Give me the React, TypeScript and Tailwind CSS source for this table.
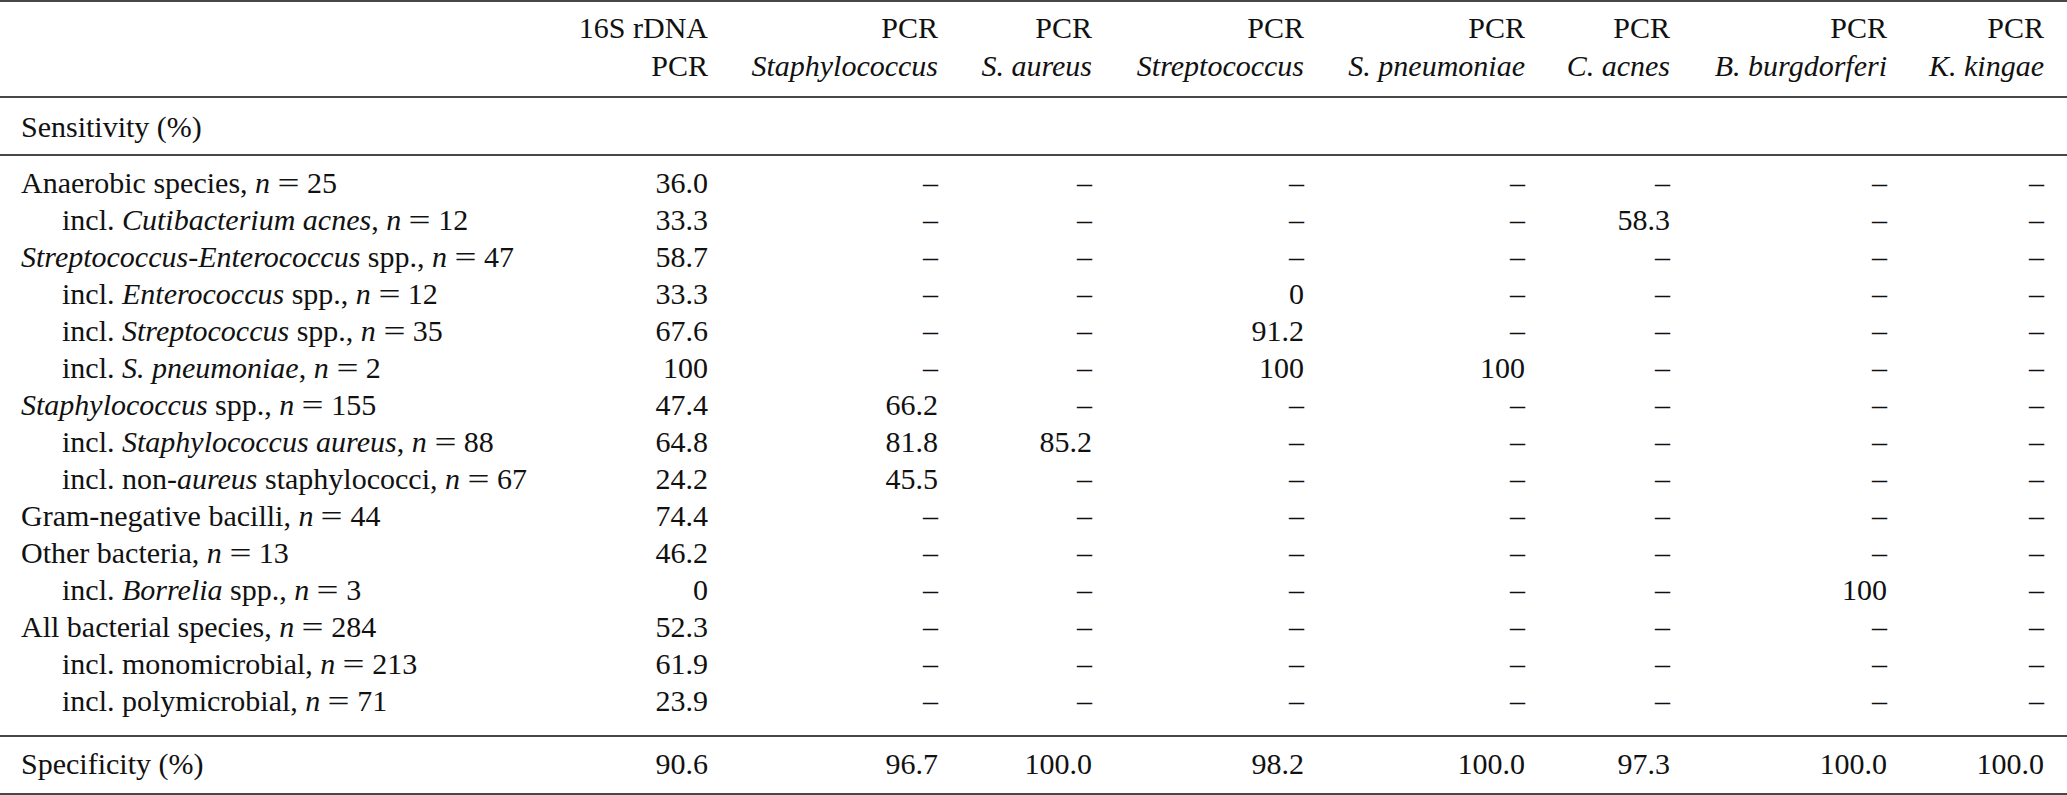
import React from "react";

const D = "\u2013";

type Row = { label: React.ReactNode; indent?: boolean; vals: string[] };

const N = ({ v }: { v: string }) => (
  <>
    , <i>n</i>
    <span className="inline-block w-[23px] mx-[7px] text-center scale-x-[1.3]">=</span>
    {v}
  </>
);

const rows: Row[] = [
  { label: <>Anaerobic species<N v="25" /></>, vals: ["36.0", D, D, D, D, D, D, D] },
  { label: <>incl. <i>Cutibacterium acnes</i><N v="12" /></>, indent: true, vals: ["33.3", D, D, D, D, "58.3", D, D] },
  { label: <><i>Streptococcus-Enterococcus</i> spp.<N v="47" /></>, vals: ["58.7", D, D, D, D, D, D, D] },
  { label: <>incl. <i>Enterococcus</i> spp.<N v="12" /></>, indent: true, vals: ["33.3", D, D, "0", D, D, D, D] },
  { label: <>incl. <i>Streptococcus</i> spp.<N v="35" /></>, indent: true, vals: ["67.6", D, D, "91.2", D, D, D, D] },
  { label: <>incl. <i>S. pneumoniae</i><N v="2" /></>, indent: true, vals: ["100", D, D, "100", "100", D, D, D] },
  { label: <><i>Staphylococcus</i> spp.<N v="155" /></>, vals: ["47.4", "66.2", D, D, D, D, D, D] },
  { label: <>incl. <i>Staphylococcus aureus</i><N v="88" /></>, indent: true, vals: ["64.8", "81.8", "85.2", D, D, D, D, D] },
  { label: <>incl. non-<i>aureus</i> staphylococci<N v="67" /></>, indent: true, vals: ["24.2", "45.5", D, D, D, D, D, D] },
  { label: <>Gram-negative bacilli<N v="44" /></>, vals: ["74.4", D, D, D, D, D, D, D] },
  { label: <>Other bacteria<N v="13" /></>, vals: ["46.2", D, D, D, D, D, D, D] },
  { label: <>incl. <i>Borrelia</i> spp.<N v="3" /></>, indent: true, vals: ["0", D, D, D, D, D, "100", D] },
  { label: <>All bacterial species<N v="284" /></>, vals: ["52.3", D, D, D, D, D, D, D] },
  { label: <>incl. monomicrobial<N v="213" /></>, indent: true, vals: ["61.9", D, D, D, D, D, D, D] },
  { label: <>incl. polymicrobial<N v="71" /></>, indent: true, vals: ["23.9", D, D, D, D, D, D, D] },
];

const heads: React.ReactNode[][] = [
  ["16S rDNA", "PCR"],
  ["PCR", <i>Staphylococcus</i>],
  ["PCR", <i>S. aureus</i>],
  ["PCR", <i>Streptococcus</i>],
  ["PCR", <i>S. pneumoniae</i>],
  ["PCR", <i>C. acnes</i>],
  ["PCR", <i>B. burgdorferi</i>],
  ["PCR", <i>K. kingae</i>],
];

const grid =
  "grid grid-cols-[560px_148px_230px_154px_212px_221px_145px_217px_157px] pr-[23px]";

function DataRow({ r }: { r: Row }) {
  return (
    <div className={grid + " leading-[37px] h-[37px]"}>
      <div className={"whitespace-nowrap " + (r.indent ? "pl-[62px]" : "pl-[21px]")}>{r.label}</div>
      {r.vals.map((v, i) => (
        <div key={i} className="text-right whitespace-nowrap">
          {v}
        </div>
      ))}
    </div>
  );
}

export default function App() {
  return (
    <div className="w-[2067px] bg-white text-[#111] text-[30px] font-['Liberation_Serif',serif]">
      <div className="border-t-2 border-[#474747] pt-[7px] pb-[11px]">
        <div className={grid + " leading-[38px]"}>
          <div />
          {heads.map((h, i) => (
            <div key={i} className="text-right whitespace-nowrap">
              <div>{h[0]}</div>
              <div>{h[1]}</div>
            </div>
          ))}
        </div>
      </div>
      <div className="border-t-2 border-[#474747] pt-[10px] pb-[9px]">
        <div className="leading-[37px] h-[37px] pl-[21px]">Sensitivity (%)</div>
      </div>
      <div className="border-t-2 border-[#474747] pt-[8px] pb-[16px]">
        {rows.map((r, i) => (
          <DataRow key={i} r={r} />
        ))}
      </div>
      <div className="border-t-2 border-b-2 border-[#474747] pt-[8px] pb-[11px]">
        <DataRow
          r={{
            label: <>Specificity (%)</>,
            vals: ["90.6", "96.7", "100.0", "98.2", "100.0", "97.3", "100.0", "100.0"],
          }}
        />
      </div>
    </div>
  );
}
